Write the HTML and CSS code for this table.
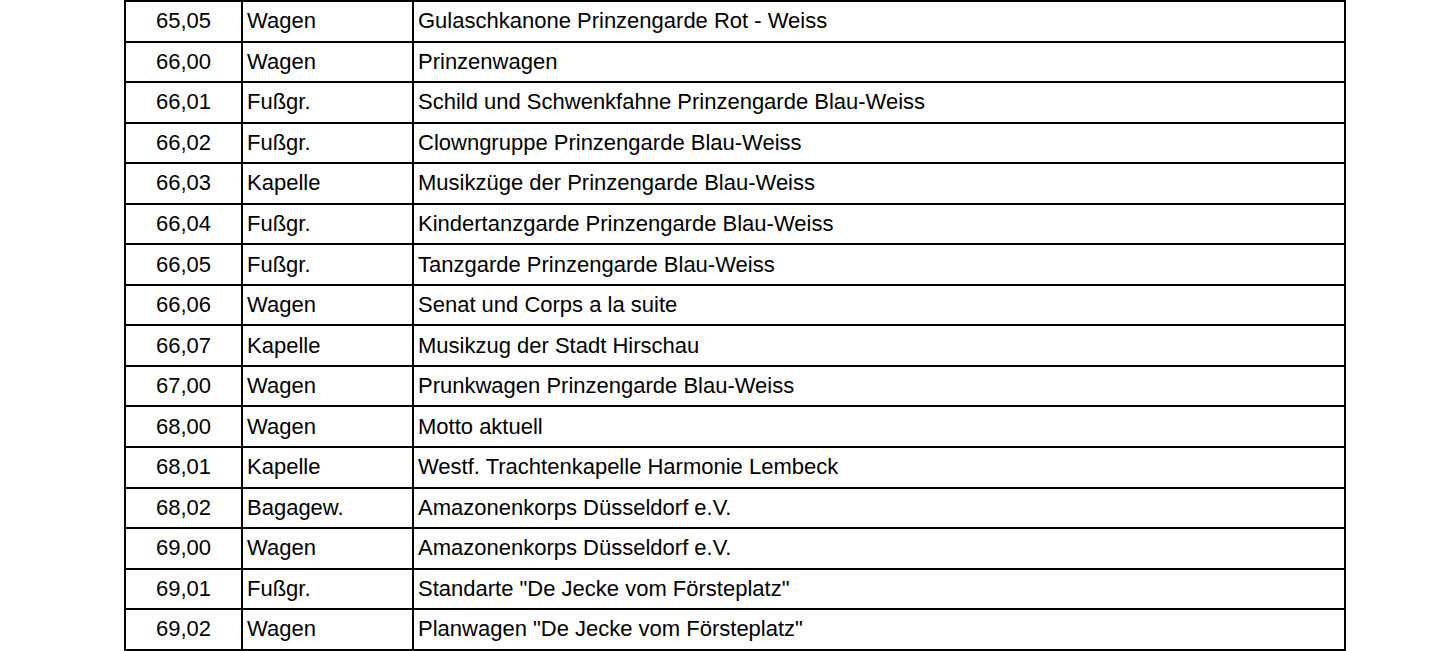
FILE: index.html
```html
<!DOCTYPE html>
<html lang="de">
<head>
<meta charset="utf-8">
<title>Zugliste</title>
<link rel="stylesheet" href="styles.css">
</head>
<body>
<table class="list">
  <colgroup><col class="c-nr"><col class="c-art"><col class="c-name"></colgroup>
  <tbody>
    <tr><td class="nr">65,05</td><td>Wagen</td><td>Gulaschkanone Prinzengarde Rot - Weiss</td></tr>
    <tr><td class="nr">66,00</td><td>Wagen</td><td>Prinzenwagen</td></tr>
    <tr><td class="nr">66,01</td><td>Fußgr.</td><td>Schild und Schwenkfahne Prinzengarde Blau-Weiss</td></tr>
    <tr><td class="nr">66,02</td><td>Fußgr.</td><td>Clowngruppe Prinzengarde Blau-Weiss</td></tr>
    <tr><td class="nr">66,03</td><td>Kapelle</td><td>Musikzüge der Prinzengarde Blau-Weiss</td></tr>
    <tr><td class="nr">66,04</td><td>Fußgr.</td><td>Kindertanzgarde Prinzengarde Blau-Weiss</td></tr>
    <tr><td class="nr">66,05</td><td>Fußgr.</td><td>Tanzgarde Prinzengarde Blau-Weiss</td></tr>
    <tr><td class="nr">66,06</td><td>Wagen</td><td>Senat und Corps a la suite</td></tr>
    <tr><td class="nr">66,07</td><td>Kapelle</td><td>Musikzug der Stadt Hirschau</td></tr>
    <tr><td class="nr">67,00</td><td>Wagen</td><td>Prunkwagen Prinzengarde Blau-Weiss</td></tr>
    <tr><td class="nr">68,00</td><td>Wagen</td><td>Motto aktuell</td></tr>
    <tr><td class="nr">68,01</td><td>Kapelle</td><td>Westf. Trachtenkapelle Harmonie Lembeck</td></tr>
    <tr><td class="nr">68,02</td><td>Bagagew.</td><td>Amazonenkorps Düsseldorf e.V.</td></tr>
    <tr><td class="nr">69,00</td><td>Wagen</td><td>Amazonenkorps Düsseldorf e.V.</td></tr>
    <tr><td class="nr">69,01</td><td>Fußgr.</td><td>Standarte "De Jecke vom Försteplatz"</td></tr>
    <tr><td class="nr">69,02</td><td>Wagen</td><td>Planwagen "De Jecke vom Försteplatz"</td></tr>
  </tbody>
</table>
</body>
</html>
```

FILE: styles.css
```css
html, body {
  margin: 0;
  padding: 0;
  background: #fff;
}
body {
  font-family: "Liberation Sans", Arial, sans-serif;
  font-size: 22px;
  color: #000;
  overflow: hidden;
}
.list {
  border-collapse: collapse;
  table-layout: fixed;
  width: 1220px;
  margin-left: 124px;
  margin-top: 0;
}
.c-nr { width: 117px; }
.c-art { width: 171px; }
.c-name { width: 932px; }
.list td {
  border: 2px solid #000;
  height: 40.56px;
  padding: 0 0 0 4px;
  box-sizing: border-box;
  vertical-align: middle;
  white-space: nowrap;
  line-height: 24px;
}
.list td.nr {
  text-align: center;
  padding: 0;
}
```
